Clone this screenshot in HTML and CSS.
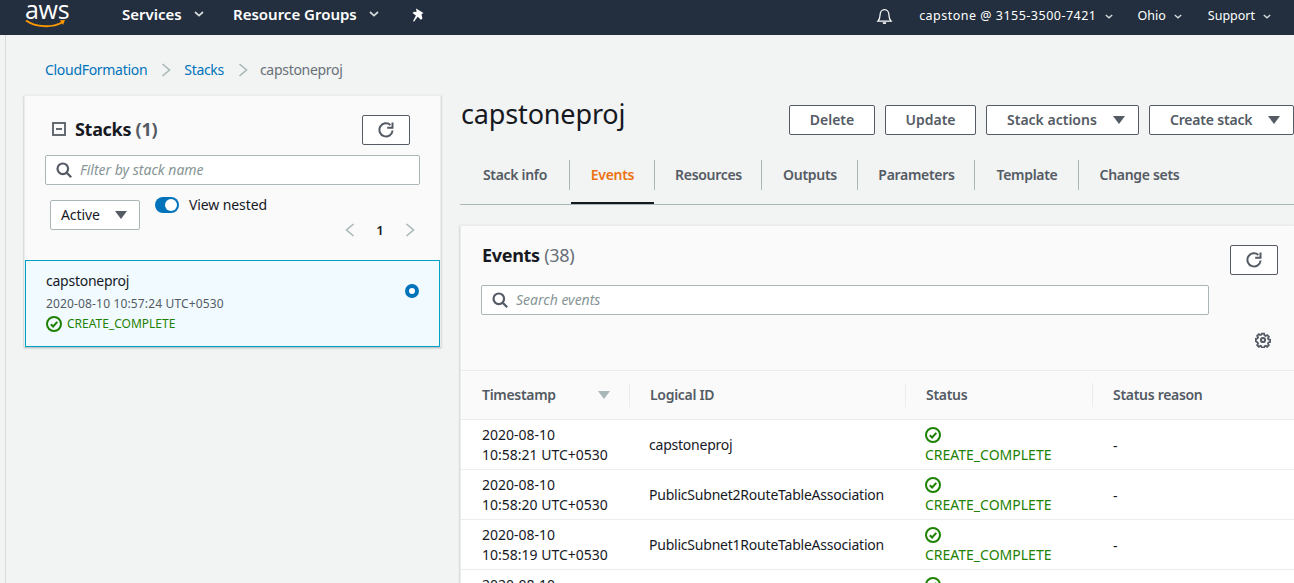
FILE: index.html
```html
<!DOCTYPE html>
<html lang="en">
<head>
<meta charset="utf-8">
<title>CloudFormation - Stacks</title>
<link rel="stylesheet" href="styles.css">
</head>
<body>
<svg class="defs" width="0" height="0" aria-hidden="true">
  <symbol id="ok" viewBox="0 0 16 16"><circle cx="8" cy="8" r="7" fill="none" stroke="#1d8102" stroke-width="2"/><path d="M4.800 8.200l2.300 2.300 4.200-4.600" fill="none" stroke="#1d8102" stroke-width="2"/></symbol>
  <symbol id="refresh" viewBox="0 0 16 16"><path d="M14.600 8.500A6.600 6.600 0 1 1 12.400 2.900" fill="none" stroke="#545b64" stroke-width="2"/><path d="M14.500 .5v5.300H9.200" fill="none" stroke="#545b64" stroke-width="2"/></symbol>
  <symbol id="search" viewBox="0 0 16 16"><circle cx="6.800" cy="6.800" r="5.300" fill="none" stroke="#545b64" stroke-width="2.200"/><path d="M10.600 10.600l4.600 4.600" stroke="#545b64" stroke-width="2.200"/></symbol>
  <symbol id="chev" viewBox="0 0 10 6"><path d="M1 1l4 3.600L9 1" fill="none" stroke="currentColor" stroke-width="1.700"/></symbol>
</svg>

<header class="topbar">
  <div class="logo"><span class="logo-text">aws</span>
    <svg class="logo-smile" viewBox="0 0 42 9" width="42" height="9"><path d="M1 1.500c10 7 26 7.500 36 2" fill="none" stroke="#f90" stroke-width="1.800"/><path d="M35 1.200l5-.2-2 5z" fill="#f90"/></svg>
  </div>
  <nav class="nav-left">
    <a class="nav-main nav-services">Services <svg class="chev" width="10" height="6"><use href="#chev"/></svg></a>
    <a class="nav-main nav-groups">Resource Groups <svg class="chev" width="10" height="6"><use href="#chev"/></svg></a>
    <svg class="pin" viewBox="0 0 14 15" width="14" height="15"><path d="M5 .5l7.500 4.600-2 1.100.9 4.200-1.500 1.300-3.200-2.900-3.700 5-.9-.7 2.800-5.600L1.500 5l1.500-1.300 2.600.2z" fill="#fff"/></svg>
  </nav>
  <nav class="nav-right">
    <svg class="bell" viewBox="0 0 18 18" width="17" height="18"><path d="M2 14.500c1.500-1.500 2.300-3 2.300-6.500 0-3.500 2-5.800 4.700-5.800s4.700 2.300 4.700 5.800c0 3.500.8 5 2.300 6.500z" fill="none" stroke="#fff" stroke-width="1.300"/><path d="M7 15.500a2 2 0 0 0 4 0z" fill="#fff"/></svg>
    <a class="nav-sub nav-account"><span class="acct-text">capstone @ 3155-3500-7421</span> <svg class="chev small" width="8" height="5"><use href="#chev"/></svg></a>
    <a class="nav-sub nav-region">Ohio <svg class="chev small" width="8" height="5"><use href="#chev"/></svg></a>
    <a class="nav-sub nav-support">Support <svg class="chev small" width="8" height="5"><use href="#chev"/></svg></a>
  </nav>
</header>

<div class="page">
  <div class="crumbs">
    <a class="link">CloudFormation</a>
    <svg class="crumb-sep" viewBox="0 0 10 14" width="10" height="14"><path d="M1.500 1l7 6-7 6" fill="none" stroke="#aab7b8" stroke-width="1.600"/></svg>
    <a class="link">Stacks</a>
    <svg class="crumb-sep crumb-sep-last" viewBox="0 0 10 14" width="10" height="14"><path d="M1.500 1l7 6-7 6" fill="none" stroke="#aab7b8" stroke-width="1.600"/></svg>
    <span class="crumb-current">capstoneproj</span>
  </div>

  <div class="columns">
    <aside class="stacks">
      <div class="stacks-head">
        <div class="stacks-title">
          <svg class="collapse" viewBox="0 0 14 14" width="14" height="14"><rect x="1" y="1" width="12" height="12" fill="none" stroke="#545b64" stroke-width="1.800"/><path d="M4 7h6" stroke="#545b64" stroke-width="1.800"/></svg>
          <h2 class="h2">Stacks <span class="count">(1)</span></h2>
        </div>
        <button class="icon-btn"><svg width="16" height="16"><use href="#refresh"/></svg></button>
      </div>
      <div class="field field-stacks"><svg width="16" height="16"><use href="#search"/></svg><span class="placeholder">Filter by stack name</span></div>
      <div class="filters">
        <div class="select">Active <span class="caret"></span></div>
        <div class="nested-col">
          <div class="nested"><span class="toggle"><span class="knob"></span></span><span>View nested</span></div>
          <div class="pager">
            <svg viewBox="0 0 10 14" width="10" height="14"><path d="M8.500 1l-7 6 7 6" fill="none" stroke="#aab7b8" stroke-width="1.600"/></svg>
            <span class="pager-num">1</span>
            <svg viewBox="0 0 10 14" width="10" height="14"><path d="M1.500 1l7 6-7 6" fill="none" stroke="#aab7b8" stroke-width="1.600"/></svg>
          </div>
        </div>
      </div>
      <div class="stack-item">
        <div class="stack-info">
          <div class="stack-name">capstoneproj</div>
          <div class="stack-date">2020-08-10 10:57:24 UTC+0530</div>
          <div class="stack-status"><svg width="16" height="16"><use href="#ok"/></svg><span>CREATE_COMPLETE</span></div>
        </div>
        <span class="radio"></span>
      </div>
    </aside>

    <main class="detail">
      <div class="detail-head">
        <h1 class="h1">capstoneproj</h1>
        <div class="actions">
          <button class="btn btn-delete">Delete</button>
          <button class="btn btn-update">Update</button>
          <button class="btn btn-stack">Stack actions <span class="caret"></span></button>
          <button class="btn btn-create">Create stack <span class="caret"></span></button>
        </div>
      </div>

      <div class="tabs">
        <a class="tab t-info">Stack info</a>
        <a class="tab tab-active t-events">Events</a>
        <a class="tab t-res">Resources</a>
        <a class="tab t-out">Outputs</a>
        <a class="tab t-par">Parameters</a>
        <a class="tab t-tpl">Template</a>
        <a class="tab t-chg">Change sets</a>
      </div>

      <section class="events">
        <div class="events-top">
          <h2 class="h2">Events <span class="count light">(38)</span></h2>
          <button class="icon-btn"><svg width="16" height="16"><use href="#refresh"/></svg></button>
        </div>
        <div class="field field-events"><svg width="16" height="16"><use href="#search"/></svg><span class="placeholder">Search events</span></div>
        <div class="gear-row">
          <svg viewBox="0 0 16 16" width="16" height="16"><path d="M6.700 1h2.600l.4 1.900 1.300.6 1.700-1 1.800 1.800-1 1.700.6 1.300 1.900.4v2.600l-1.900.4-.6 1.300 1 1.700-1.800 1.800-1.700-1-1.300.6-.4 1.400H6.700l-.4-1.400-1.300-.6-1.700 1-1.800-1.800 1-1.700-.6-1.300L0 9.300V6.700l1.900-.4.6-1.300-1-1.700L3.300 1.500l1.700 1 1.300-.6z" fill="none" stroke="#545b64" stroke-width="2" transform="translate(.8 .8) scale(.9)"/><circle cx="8" cy="8" r="2.100" fill="none" stroke="#545b64" stroke-width="2"/></svg>
        </div>

        <div class="table">
          <div class="row head">
            <div class="cell c1"><span>Timestamp</span><span class="sort"></span></div>
            <div class="cell c2">Logical ID</div>
            <div class="cell c3">Status</div>
            <div class="cell c4">Status reason</div>
          </div>
          <div class="row">
            <div class="cell c1">2020-08-10<br>10:58:21 UTC+0530</div>
            <div class="cell c2">capstoneproj</div>
            <div class="cell c3"><svg width="16" height="16"><use href="#ok"/></svg><span>CREATE_COMPLETE</span></div>
            <div class="cell c4">-</div>
          </div>
          <div class="row">
            <div class="cell c1">2020-08-10<br>10:58:20 UTC+0530</div>
            <div class="cell c2">PublicSubnet2RouteTableAssociation</div>
            <div class="cell c3"><svg width="16" height="16"><use href="#ok"/></svg><span>CREATE_COMPLETE</span></div>
            <div class="cell c4">-</div>
          </div>
          <div class="row">
            <div class="cell c1">2020-08-10<br>10:58:19 UTC+0530</div>
            <div class="cell c2">PublicSubnet1RouteTableAssociation</div>
            <div class="cell c3"><svg width="16" height="16"><use href="#ok"/></svg><span>CREATE_COMPLETE</span></div>
            <div class="cell c4">-</div>
          </div>
          <div class="row">
            <div class="cell c1">2020-08-10<br>10:58:18 UTC+0530</div>
            <div class="cell c2">PublicSubnet2</div>
            <div class="cell c3"><svg width="16" height="16"><use href="#ok"/></svg><span>CREATE_COMPLETE</span></div>
            <div class="cell c4">-</div>
          </div>
        </div>
      </section>
    </main>
  </div>
</div>
</body>
</html>
```
FILE: styles.css
```css
* { box-sizing: border-box; }
html, body { margin: 0; height: 583px; overflow: hidden; }
body { font-family: "Noto Sans", "Open Sans", sans-serif; font-size: 14px; line-height: 20px; color: #16191f; background: #f2f3f3; }
.defs { display: block; height: 0; }
h1, h2 { margin: 0; }

/* top bar */
.topbar { height: 35px; background: #232f3e; color: #fff; display: flex; align-items: center; justify-content: space-between; overflow: hidden; }
.logo { width: 42px; margin-left: 25px; height: 35px; flex: none; }
.logo-text { display: block; font-family: "Open Sans", sans-serif; font-size: 25px; line-height: 24px; margin-top: -3px; letter-spacing: -.3px; }
.logo-smile { display: block; margin-top: -2px; }
.nav-left { display: flex; align-items: center; flex: 1; margin-left: 55px; }
.nav-main { font-weight: 600; font-size: 15px; display: flex; align-items: center; margin-top: -7px; white-space: nowrap; }
.nav-services { width: 111px; }
.nav-groups { width: 178px; }
.chev { margin-left: 12px; color: #d5dbdb; }
.chev.small { margin-left: 8px; }
.pin { margin-top: -5px; }
.nav-right { display: flex; align-items: center; padding-right: 23px; }
.bell { margin-right: 26px; margin-top: -3px; }
.nav-sub { font-size: 12.500px; display: flex; align-items: center; white-space: nowrap; margin-top: -3px; }
.acct-text { letter-spacing: .49px; }
.nav-account { margin-right: 25px; }
.nav-region { margin-right: 26px; }

/* page */
.page { height: 548px; margin-left: 5px; border-left: 1px solid #d5dbdb; }
.crumbs { height: 61px; padding: 9px 0 0 39px; display: flex; align-items: center; letter-spacing: -.3px; }
.link { color: #0073bb; }
.crumb-sep { margin: 0 13px 0 14px; }
.crumb-sep-last { margin-right: 12px; }
.crumb-current { color: #687078; }
.columns { display: flex; padding-left: 18px; }

/* stacks panel */
.stacks { width: 417px; height: 252px; flex: none; background: #fafafa; border: 1px solid #eaeded; box-shadow: 0 1px 2px rgba(0,28,36,.3); margin: -1px 19px 0 0; }
.stacks-head { display: flex; justify-content: space-between; padding: 19px 30px 0 27px; height: 59px; }
.stacks-title { display: flex; align-items: center; height: 30px; margin-top: -1px; }
.collapse { margin-right: 9px; }
.h2 { font-size: 18px; line-height: 24px; font-weight: 700; color: #16191f; white-space: nowrap; letter-spacing: -.3px; }
.count { color: #545b64; font-weight: 700; }
.count.light { color: #687078; font-weight: 400; }
.icon-btn { width: 48px; height: 30px; background: #fff; border: 1px solid #545b64; border-radius: 2px; padding: 0; display: flex; align-items: center; justify-content: center; flex: none; }
.field { height: 30px; background: #fff; border: 1px solid #aab7b8; border-radius: 2px; display: flex; align-items: center; padding-left: 10px; }
.placeholder { margin-left: 8px; color: #879596; font-style: italic; font-size: 14px; }
.field-stacks { width: 375px; margin-left: 20px; }
.filters { display: flex; margin: 12px 0 0 25px; height: 61px; letter-spacing: -.1px; }
.select { width: 90px; height: 30px; margin-top: 3px; background: #fff; border: 1px solid #aab7b8; border-radius: 2px; display: flex; align-items: center; justify-content: space-between; padding: 0 12px 0 10px; }
.caret { display: inline-block; width: 0; height: 0; border-left: 6px solid transparent; border-right: 6px solid transparent; border-top: 8px solid #545b64; }
.nested-col { margin-left: 15px; width: 260px; }
.nested { display: flex; align-items: center; height: 16px; }
.toggle { width: 24px; height: 16px; background: #0073bb; border-radius: 8px; padding: 2px 2px 2px 10px; margin-right: 10px; }
.knob { display: block; width: 12px; height: 12px; background: #fff; border-radius: 50%; }
.pager { display: flex; justify-content: flex-end; align-items: center; margin-top: 7px; height: 20px; }
.pager-num { width: 50px; text-align: center; font-weight: 600; font-size: 13px; }
.stack-item { height: 87px; margin-top: 2px; background: #f1faff; border: 1px solid #00a1c9; display: flex; justify-content: space-between; padding: 10px 20px 0 20px; }
.stack-name { line-height: 20px; letter-spacing: -.25px; }
.stack-date { font-size: 12px; line-height: 16px; color: #545b64; margin-top: 5px; letter-spacing: .15px; }
.stack-status { display: flex; align-items: center; font-size: 12px; line-height: 16px; color: #1d8102; margin-top: 4px; }
.stack-status span { margin-left: 5px; }
.radio { width: 14px; height: 14px; margin-top: 13px; border-radius: 50%; border: 4px solid #0073bb; background: #fff; }

/* detail */
.detail { flex: 1; min-width: 0; }
.detail-head { display: flex; justify-content: space-between; margin-top: -1px; height: 65px; }
.h1 { font-size: 27px; line-height: 38px; font-weight: 400; color: #16191f; letter-spacing: -.15px; padding-left: 1px; }
.actions { display: flex; gap: 10px; padding-top: 10px; }
.btn { height: 30px; background: #fff; border: 1px solid #545b64; border-radius: 2px; color: #545b64; font: 600 14px/20px "Noto Sans", "Open Sans", sans-serif; display: flex; align-items: center; justify-content: space-between; padding: 0 20px; white-space: nowrap; }
.btn-delete { width: 86px; justify-content: center; }
.btn-update { width: 91px; justify-content: center; }
.btn-stack { width: 153px; }
.btn-stack .caret, .btn-create .caret { margin-right: -7px; }
.btn-create { width: 145px; letter-spacing: -.2px; }

.tabs { display: flex; height: 45px; border-bottom: 1px solid #aab7b8; letter-spacing: -.3px; }
.tab { height: 44px; font-weight: 600; color: #545b64; white-space: nowrap; padding: 5px 0 0 2px; position: relative; text-align: center; }
.tab::before { content: ""; position: absolute; left: 0; top: 0; height: 30px; width: 1px; background: #aab7b8; }
.t-info { width: 109px; padding-left: 1px; }
.t-info::before { display: none; }
.t-events { width: 85px; color: #ec7211; }
.t-events::after { content: ""; position: absolute; left: 2px; right: 0; bottom: 0; height: 2px; background: #16191f; }
.t-res { width: 107px; }
.t-out { width: 96px; }
.t-par { width: 117px; }
.t-tpl { width: 104px; }
.t-chg { width: 121px; }

.events { margin-top: 20px; height: 400px; background: #fafafa; border-left: 1px solid #eaeded; border-top: 1px solid #eaeded; box-shadow: 0 1px 2px rgba(0,28,36,.3); }
.events-top { display: flex; justify-content: space-between; padding: 19px 16px 0 21px; height: 59px; }
.events-top .h2 { line-height: 20px; }
.field-events { width: 728px; margin-left: 20px; }
.gear-row { height: 55px; display: flex; justify-content: flex-end; padding: 17px 23px 0 0; }
.table { background: #fff; }
.row { display: grid; grid-template-columns: 168px 276px 187px 1fr; height: 50px; border-bottom: 1px solid #eaeded; align-items: center; }
.cell { padding-left: 20px; line-height: 20px; white-space: nowrap; color: #16191f; }
.row .c1 { padding-left: 21px; }
.row .c2 { letter-spacing: -.22px; }
.row .c3 { display: flex; flex-direction: column; align-items: flex-start; color: #1d8102; }
.row .c3 svg { display: block; height: 20px; padding: 2px 0; width: 16px; }
.row .c3 span { line-height: 20px; }
.row .c4 { padding: 2px 0 0 21px; }
.row.head { height: 50px; background: #fafafa; border-top: 1px solid #eaeded; border-bottom: 1px solid #eaeded; }
.row.head .cell { font-weight: 600; color: #545b64; height: 24px; line-height: 24px; border-left: 1px solid #eaeded; letter-spacing: -.3px; padding-top: 0; }
.row.head .c1 { border-left: 0; display: flex; justify-content: space-between; padding-right: 19px; }
.row.head .c3 { display: block; }
.row.head .c4 { padding-left: 20px; }
.sort { width: 0; height: 0; margin-top: 8px; border-left: 6px solid transparent; border-right: 6px solid transparent; border-top: 8px solid #aab7b8; }
```
